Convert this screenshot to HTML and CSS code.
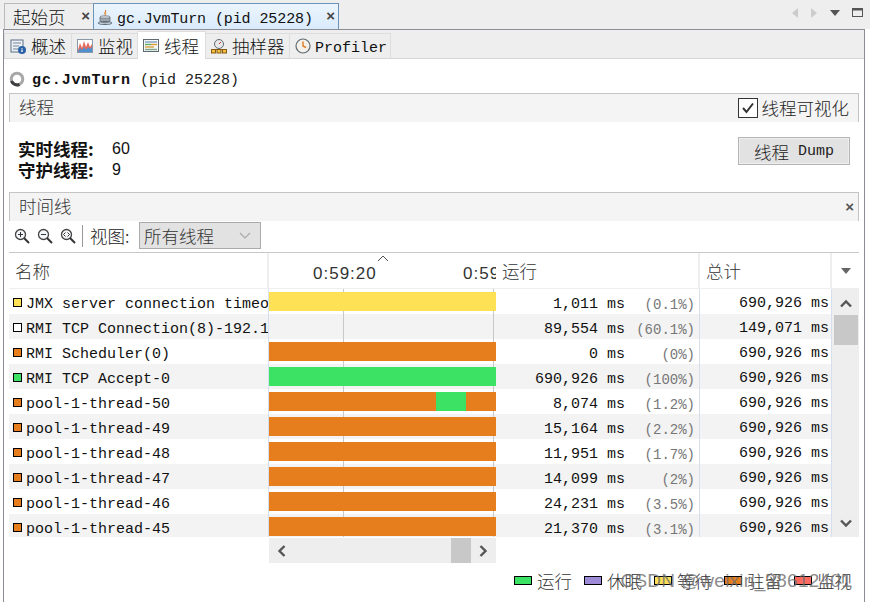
FILE: index.html
```html
<!DOCTYPE html>
<html lang="zh-CN">
<head>
<meta charset="utf-8">
<title>gc.JvmTurn</title>
<link rel="stylesheet" href="styles.css">
</head>
<body>
<div class="app">
  <div class="doctabs">
    <div class="doctab"><span class="c">起始页</span><span class="x">×</span></div>
    <div class="doctab active">
      <svg class="ic16" viewBox="0 0 16 16"><path d="M8 1c1 2-2 3-1 5 0-2 3-2 2-5z" fill="#d9762a"/><path d="M9 3c1 2-1 3 0 4-2 0-2-2 0-4z" fill="#e89a4a"/><path d="M3 8h10v3c0 2-2 3-5 3s-5-1-5-3z" fill="#9aa5ad" stroke="#5f6a72" stroke-width=".8"/><ellipse cx="8" cy="14" rx="7" ry="1.5" fill="none" stroke="#5f6a72"/><ellipse cx="8" cy="8" rx="5" ry="1.3" fill="#cdd4d9" stroke="#5f6a72" stroke-width=".6"/></svg>
      <span class="doctitle">gc.JvmTurn (pid 25228)</span><span class="x">×</span>
    </div>
    <div class="navicons">
      <svg width="8" height="12" viewBox="0 0 8 12"><path d="M7 1v10L1 6z" fill="#ccc"/></svg>
      <svg width="8" height="12" viewBox="0 0 8 12"><path d="M1 1v10l6-5z" fill="#ccc"/></svg>
      <svg width="12" height="8" viewBox="0 0 12 8"><path d="M1 1h10L6 7z" fill="#555"/></svg>
      <svg width="12" height="10" viewBox="0 0 12 10"><rect x=".5" y=".5" width="10" height="8" fill="none" stroke="#555"/><path d="M0 1.5h11" stroke="#555" stroke-width="2"/></svg>
    </div>
  </div>
  <div class="panel">
    <div class="subtabs">
      <div class="subtab">
        <svg class="ic16" viewBox="0 0 16 16"><rect x="1" y="2" width="12" height="12" fill="#eef2f6" stroke="#5b6f85"/><path d="M3 5h8M3 8h6M3 11h5" stroke="#6f8296"/><circle cx="12" cy="12" r="4" fill="#2a62a8"/><path d="M12 10v.8M12 11.6V14" stroke="#fff" stroke-width="1.3"/></svg>
        <span class="c">概述</span></div>
      <div class="subtab">
        <svg class="ic16" viewBox="0 0 16 16"><rect x=".5" y="1.5" width="15" height="13" fill="#fff" stroke="#8a97a6"/><path d="M1 12l2-7 2 5 2-7 2 6 2-5 2 5 2-3v8H1z" fill="#e66a5c"/><path d="M1 14l2-4 2 2 2-3 2 3 2-3 2 2 2-2v5H1z" fill="#4d8fd1"/></svg>
        <span class="c">监视</span></div>
      <div class="subtab on">
        <svg class="ic16 wide" viewBox="0 0 16 16"><rect x=".5" y="1.5" width="15" height="12" fill="#f4f6f8" stroke="#5f6a72"/><path d="M2 4h12" stroke="#7fa0c0" stroke-width="1.4"/><path d="M2 6.5h6" stroke="#60b060" stroke-width="1.4"/><path d="M8 6.5h6" stroke="#e0a030" stroke-width="1.4"/><path d="M2 9h9" stroke="#d9a040" stroke-width="1.4"/><path d="M2 11.5h12" stroke="#80a880" stroke-width="1.4"/></svg>
        <span class="c">线程</span></div>
      <div class="subtab">
        <svg class="ic16" viewBox="0 0 16 16"><circle cx="8" cy="6" r="4.5" fill="#e8e8ea" stroke="#5f6a72"/><path d="M8 6l2-2" stroke="#c33"/><path d="M1 11.500h14" stroke="#8a5a10"/><rect x=".5" y="11.500" width="4" height="3.500" fill="#f0c040" stroke="#8a5a10"/><rect x="6" y="11.500" width="4" height="3.500" fill="#f0c040" stroke="#8a5a10"/><rect x="11.500" y="11.500" width="4" height="3.500" fill="#f0c040" stroke="#8a5a10"/></svg>
        <span class="c">抽样器</span></div>
      <div class="subtab">
        <svg class="ic16" viewBox="0 0 16 16"><circle cx="8" cy="8" r="7" fill="#f3f1ea" stroke="#5f6a72" stroke-width="1.2"/><path d="M8 3.500V8l3 1.500" fill="none" stroke="#e07a20" stroke-width="1.4"/></svg>
        <span class="lat">Profiler</span></div>
    </div>
    <div class="content">
      <div class="apptitle">
        <svg class="spin" viewBox="0 0 16 16"><circle cx="8" cy="8" r="5.800" fill="none" stroke="#a8a8a8" stroke-width="3"/><path d="M2.500 10a6 6 0 0 0 8 3.500" fill="none" stroke="#3f3f44" stroke-width="3"/></svg>
        <b>gc.JvmTurn</b><span class="pid">(pid 25228)</span>
      </div>
      <div class="sect">
        <span class="c sect-t">线程</span>
        <label class="chk"><span class="box"><svg width="18" height="18" viewBox="0 0 18 18"><path d="M4 9l3.500 4L14 4.500" fill="none" stroke="#333" stroke-width="2"/></svg></span><span class="c">线程可视化</span></label>
      </div>
      <div class="stats">
        <div class="counts">
          <div class="cnt"><b class="c">实时线程:</b><span class="val">60</span></div>
          <div class="cnt"><b class="c">守护线程:</b><span class="val">9</span></div>
        </div>
        <div class="dump"><span class="c">线程</span> Dump</div>
      </div>
      <div class="sect">
        <span class="c sect-t">时间线</span><span class="close">×</span>
      </div>
      <div class="tools">
        <svg class="zoom" viewBox="0 0 16 16"><circle cx="6.500" cy="6.500" r="5" fill="#f4f7fa" stroke="#444" stroke-width="1.300"/><path d="M10 10l5 5" stroke="#333" stroke-width="2"/><path d="M4 6.500h5M6.500 4v5" stroke="#333"/></svg>
        <svg class="zoom" viewBox="0 0 16 16"><circle cx="6.500" cy="6.500" r="5" fill="#f4f7fa" stroke="#444" stroke-width="1.300"/><path d="M10 10l5 5" stroke="#333" stroke-width="2"/><path d="M4 6.500h5" stroke="#333"/></svg>
        <svg class="zoom" viewBox="0 0 16 16"><circle cx="6.500" cy="6.500" r="5" fill="#f4f7fa" stroke="#444" stroke-width="1.300"/><path d="M10 10l5 5" stroke="#333" stroke-width="2"/><path d="M5.500 4.500l-2 2 2 2M7.500 4.500l2 2-2 2" fill="none" stroke="#333"/></svg>
        <i class="sep"></i>
        <span class="c viewl">视图:</span>
        <div class="combo"><span class="c">所有线程</span><svg width="12" height="7" viewBox="0 0 12 7"><path d="M1 1l5 5 5-5" fill="none" stroke="#aaa" stroke-width="1.200"/></svg></div>
      </div>
      <div class="thead">
        <div class="th"><span class="c">名称</span></div>
        <div class="th tl"><svg class="sortm" width="12" height="7" viewBox="0 0 12 7"><path d="M1 6l5-5 5 5" fill="none" stroke="#555"/></svg><span class="t1">0:59:20</span><span class="t2">0:59</span></div>
        <div class="th"><span class="c">运行</span></div>
        <div class="th"><span class="c">总计</span></div>
        <div class="th more"><svg width="10" height="6" viewBox="0 0 10 6"><path d="M0 0h10L5 6z" fill="#666"/></svg></div>
      </div>
      <div class="tbody">
        <div class="rows">
          <div class="row"><div class="nm"><i class="sw y"></i>JMX server connection timeo</div><div class="tlc"><i class="bar y"></i></div><div class="run"><span class="ms">1,011 ms</span><span class="pc">(0.1%)</span></div><div class="tot">690,926 ms</div></div>
          <div class="row"><div class="nm"><i class="sw w"></i>RMI TCP Connection(8)-192.1</div><div class="tlc"></div><div class="run"><span class="ms">89,554 ms</span><span class="pc">(60.1%)</span></div><div class="tot">149,071 ms</div></div>
          <div class="row"><div class="nm"><i class="sw o"></i>RMI Scheduler(0)</div><div class="tlc"><i class="bar o"></i></div><div class="run"><span class="ms">0 ms</span><span class="pc">(0%)</span></div><div class="tot">690,926 ms</div></div>
          <div class="row"><div class="nm"><i class="sw g"></i>RMI TCP Accept-0</div><div class="tlc"><i class="bar g"></i></div><div class="run"><span class="ms">690,926 ms</span><span class="pc">(100%)</span></div><div class="tot">690,926 ms</div></div>
          <div class="row"><div class="nm"><i class="sw o"></i>pool-1-thread-50</div><div class="tlc"><i class="bar o"><i class="seg"></i></i></div><div class="run"><span class="ms">8,074 ms</span><span class="pc">(1.2%)</span></div><div class="tot">690,926 ms</div></div>
          <div class="row"><div class="nm"><i class="sw o"></i>pool-1-thread-49</div><div class="tlc"><i class="bar o"></i></div><div class="run"><span class="ms">15,164 ms</span><span class="pc">(2.2%)</span></div><div class="tot">690,926 ms</div></div>
          <div class="row"><div class="nm"><i class="sw o"></i>pool-1-thread-48</div><div class="tlc"><i class="bar o"></i></div><div class="run"><span class="ms">11,951 ms</span><span class="pc">(1.7%)</span></div><div class="tot">690,926 ms</div></div>
          <div class="row"><div class="nm"><i class="sw o"></i>pool-1-thread-47</div><div class="tlc"><i class="bar o"></i></div><div class="run"><span class="ms">14,099 ms</span><span class="pc">(2%)</span></div><div class="tot">690,926 ms</div></div>
          <div class="row"><div class="nm"><i class="sw o"></i>pool-1-thread-46</div><div class="tlc"><i class="bar o"></i></div><div class="run"><span class="ms">24,231 ms</span><span class="pc">(3.5%)</span></div><div class="tot">690,926 ms</div></div>
          <div class="row"><div class="nm"><i class="sw o"></i>pool-1-thread-45</div><div class="tlc"><i class="bar o"></i></div><div class="run"><span class="ms">21,370 ms</span><span class="pc">(3.1%)</span></div><div class="tot">690,926 ms</div></div>
        </div>
        <div class="vbar">
          <svg width="14" height="9" viewBox="0 0 14 9"><path d="M2 7.500l5-5 5 5" fill="none" stroke="#555" stroke-width="2.400"/></svg>
          <i class="vthumb"></i>
          <svg class="vdown" width="14" height="9" viewBox="0 0 14 9"><path d="M2 1.500l5 5 5-5" fill="none" stroke="#555" stroke-width="2.400"/></svg>
        </div>
      </div>
      <div class="hbar">
        <svg width="9" height="14" viewBox="0 0 9 14"><path d="M7.500 2l-5 5 5 5" fill="none" stroke="#555" stroke-width="2.400"/></svg>
        <i class="hthumb"></i>
        <svg width="9" height="14" viewBox="0 0 9 14"><path d="M1.500 2l5 5-5 5" fill="none" stroke="#555" stroke-width="2.400"/></svg>
      </div>
      <div class="legend">
        <div class="lg"><i class="ls g"></i><span class="c">运行</span></div>
        <div class="lg"><i class="ls p"></i><span class="c">休眠</span></div>
        <div class="lg"><i class="ls y"></i><span class="c">等待</span></div>
        <div class="lg"><i class="ls o"></i><span class="c">驻留</span></div>
        <div class="lg"><i class="ls r"></i><span class="c">监视</span></div>
        <div class="wm">CSDN @weixin_38612401</div>
      </div>
    </div>
  </div>
</div>
</body>
</html>
```
FILE: styles.css
```css
* { box-sizing: border-box; }
html, body { margin: 0; padding: 0; }
body {
  width: 870px;
  height: 602px;
  overflow: hidden;
  background: #fff;
  color: #111;
  font: 15px/20px "Liberation Mono", "Noto Sans CJK SC", monospace;
}
.c { font-family: "Noto Sans CJK SC", "Liberation Sans", sans-serif; font-size: 17.500px; font-weight: 300; }
i { display: block; font-style: normal; }
.app { display: flex; flex-direction: column; height: 602px; background: #fff; }

.doctabs { display: flex; height: 29px; padding: 3px 0 0 4px; background: #eee; flex: none; }
.doctab {
  width: 90px; height: 26px; display: flex; align-items: center; gap: 0;
  padding-left: 8px; border: 1px solid #bbb; border-bottom: 0; background: #eee;
}
.doctab .x { margin-left: auto; margin-right: 3px; padding-bottom: 2px; font: bold 15px/20px "Liberation Sans", sans-serif; color: #444; }
.doctab.active {
  width: 246px; padding-left: 3px; margin-left: -1px;
  border-color: #6c94b8; background: linear-gradient(#ecf5fd, #d9ebfb);
}
.doctab.active .ic16 { margin-right: 4px; }
.doctitle { font-size: 15px; white-space: nowrap; letter-spacing: -.1px; padding-top: 7px; }
.navicons { margin-left: auto; display: flex; align-items: center; gap: 11px; height: 20px; padding-right: 6px; }
.ic16 { width: 16px; height: 16px; flex: none; display: block; }

.panel {
  flex: 1; min-height: 0; margin-left: 3px; width: 862px;
  border: 1px solid #8c8c96; border-bottom: 0;
  display: flex; flex-direction: column;
}
.subtabs { display: flex; height: 29px; flex: none; align-items: flex-end; padding-left: 0; background: #eee; border-bottom: 1px solid #d6d6d6; }
.subtab {
  height: 25px; display: flex; align-items: center; gap: 5px; padding: 0 3px 0 5px;
  background: #eee; border: 1px solid #ddd; border-bottom: 0; margin-right: -1px; white-space: nowrap;
}
.subtab .lat { padding-top: 5px; margin-left: -1px; }
.subtab.on { height: 28px; margin-bottom: -1px; background: #fff; padding: 0 5px; position: relative; }
.subtab:nth-child(1) { width: 68px; }
.subtab:nth-child(2) { width: 67px; }
.subtab:nth-child(3) { width: 69px; }
.subtab:nth-child(4) { width: 85px; }
.subtab:nth-child(5) { width: 102px; }

.content { flex: 1; min-height: 0; display: flex; flex-direction: column; padding: 0 5px; }

.apptitle { height: 34px; flex: none; display: flex; align-items: center; padding: 9px 0 0; white-space: nowrap; }
.apptitle b { font: bold 15px/20px "Liberation Mono", monospace; margin-left: 7px; letter-spacing: .9px; }
.spin { width: 16px; height: 16px; margin-bottom: 4px; }
.pid { margin-left: 9px; color: #222; }

.sect {
  height: 29px; flex: none; display: flex; align-items: center; justify-content: space-between;
  padding: 0 9px; background: #f4f4f4; border: 1px solid #c4c4c4; border-width: 1px 1px 0 1px;
}
.sect-t { color: #333; padding-bottom: 2px; }
.chk { display: flex; align-items: center; gap: 4px; color: #222; }
.box { width: 20px; height: 20px; border: 1px solid #333; background: #fff; display: block; }
.box svg { display: block; }
.close { font: bold 15px/20px "Liberation Sans", sans-serif; color: #555; margin-right: -5px; }

.stats { height: 70px; flex: none; display: flex; justify-content: space-between; padding: 15px 9px 0 9px; }
.counts { padding-top: 1px; }
.cnt { height: 21px; display: flex; align-items: center; }
.cnt b { font-weight: 700; font-size: 17.500px; width: 94px; }
.val { font: 16px/20px "Liberation Sans", sans-serif; }
.dump {
  width: 112px; height: 28px; display: flex; align-items: center; justify-content: center; gap: 9px; padding-top: 2px;
  background: #e2e2e2; border: 1px solid #b4b4b4; box-shadow: 0 0 0 1px #eee inset; color: #222;
}

.tools { height: 32px; flex: none; display: flex; align-items: center; padding: 0 0 2px 5px; border-bottom: 1px solid #c8c8c8; }
.zoom { width: 16px; height: 16px; margin-right: 7px; flex: none; }
.sep { width: 1px; height: 22px; background: #999; margin: 0 7px 0 -1px; }
.viewl { width: 49px; color: #222; }
.combo {
  width: 122px; height: 27px; display: flex; align-items: center; justify-content: space-between;
  padding: 0 9px 0 4px; background: #e2e2e2; border: 1px solid #aaa;
}
.combo .c { color: #333; }

.thead { height: 36px; flex: none; display: grid; grid-template-columns: 260px 227px 204px 132px 27px; }
.th { display: flex; align-items: center; padding: 0 6px; border-right: 2px solid #eee; color: #333; border-bottom: 1px solid #eee; overflow: hidden; white-space: nowrap; }
.th.tl { position: relative; padding: 0; border-right: 0; }
.t1, .t2 { position: absolute; top: 11px; font: 17px/20px "Liberation Sans", sans-serif; letter-spacing: 1px; }
.t1 { left: 44px; }
.t2 { left: 194px; }
.sortm { position: absolute; left: 108px; top: 2px; }
.th.more { justify-content: center; padding: 0; border-right: 0; }

.tbody { display: grid; grid-template-columns: 823px 27px; height: 248px; flex: none; overflow: hidden; }
.rows { height: 248px; overflow: hidden; }
.row { height: 25px; display: grid; grid-template-columns: 260px 227px 204px 132px; background: #fff; }
.row:nth-child(even) { background: #f3f3f3; }
.nm { display: flex; align-items: center; padding: 4px 0 0 4px; white-space: nowrap; overflow: hidden; border-right: 1px solid #d5dff0; }
.sw { width: 9px; height: 9px; border: 1px solid #000; margin-right: 4px; flex: none; margin-top: -4px; }
.tlc {
  padding-top: 3px; height: 25px;
  background: linear-gradient(#c8c8c8, #c8c8c8) 74px 0/1px 100% no-repeat, linear-gradient(#c8c8c8, #c8c8c8) 224px 0/1px 100% no-repeat;
}
.bar { height: 19px; width: 227px; position: relative; }
.seg { position: absolute; left: 167px; top: 0; width: 30px; height: 19px; background: #3ce264; }
.y { background: #ffe156; }
.w { background: #fff; }
.o { background: #e67e1e; }
.g { background: #3ce264; }
.p { background: #9e8bd8; }
.r { background: #ff6a60; }
.run { display: flex; align-items: center; justify-content: flex-end; padding: 4px 4px 0 0; border-right: 1px solid #d5dff0; }
.ms { white-space: nowrap; }
.pc { width: 70px; text-align: right; font-size: 14px; color: #777; white-space: nowrap; }
.tot { text-align: right; padding: 2px 2px 0 0; line-height: 25px; white-space: nowrap; border-right: 1px solid #d5dff0; }

.vbar { background: #eee; display: flex; flex-direction: column; align-items: center; padding-top: 10px; position: relative; }
.vthumb { width: 24px; height: 30px; background: #c8c8c8; margin-top: 7px; }
.vdown { margin-top: auto; margin-bottom: 9px; }

.hbar {
  margin-left: 260px; width: 227px; height: 25px; flex: none; background: #eee; margin-top: 1px;
  display: flex; align-items: center; padding: 0 8px; position: relative;
}
.hthumb { width: 20px; height: 25px; background: #c8c8c8; margin-left: 165px; margin-right: 8px; }

.legend { flex: none; height: 35px; display: flex; justify-content: flex-end; align-items: center; padding-right: 7px; position: relative; color: #333; }
.lg { width: 70px; display: flex; align-items: center; gap: 5px; white-space: nowrap; }
.ls { width: 18px; height: 9px; border: 1px solid #000; flex: none; }
.lg:nth-child(5) { width: 58px; }
.wm { position: absolute; right: 7px; top: 7px; font: 19px/22px "Liberation Sans", sans-serif; letter-spacing: .25px; color: rgba(110,110,110,.8); white-space: nowrap; }
```
